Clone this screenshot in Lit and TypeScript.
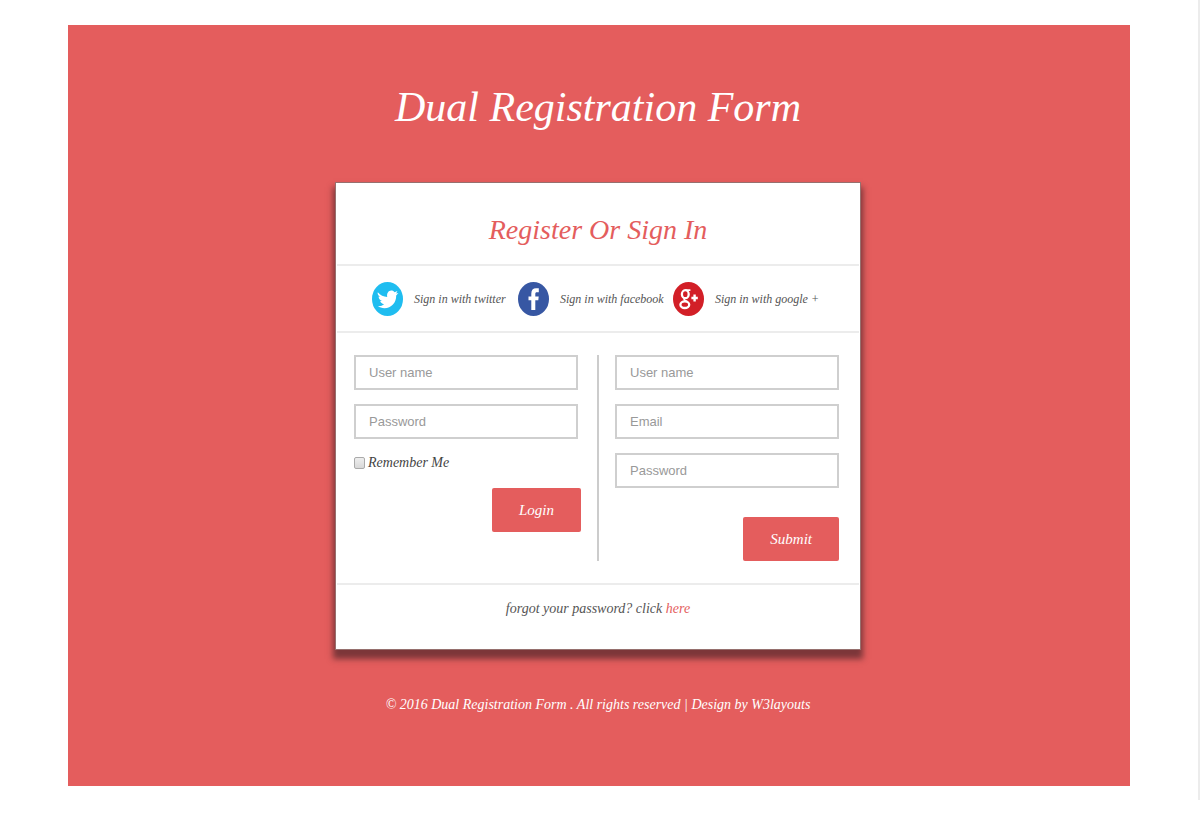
import { LitElement, html, css, svg } from "lit";
import { customElement } from "lit/decorators.js";

const twitter = svg`<ellipse cx="15.5" cy="17" rx="15.5" ry="17" fill="#1fbdf0"/>
<path fill="#fff" d="M5.8 10.2C8.3 13.3 11.6 14.8 15.2 14.9C14.5 11.6 16.5 8.6 19.2 8.6C20.7 8.6 21.8 9.2 22.6 10.2L25.4 9L24.2 11.5L26.4 10.9L24.2 13.5C24.4 20.7 19.2 26.2 12.5 26.2C9.9 26.2 7.6 25.5 5.8 24.1C8.4 24.3 10.4 23.6 12.1 22.2C10 22 8.7 20.8 8.2 19.1H10C7.8 18.3 6.7 16.7 6.6 14.5L8.4 15C6.3 13.5 5.2 12 5.8 10.2Z"/>`;
const facebook = svg`<ellipse cx="15.5" cy="17" rx="15.5" ry="17" fill="#3757a3"/>
<path fill="#fff" d="M13.3 28V18.3H10.5V14.4H13.3V11.7C13.3 8 15.1 6.2 18 6.2H20.8V10.2H18.8C17.7 10.2 17.3 10.8 17.3 12V14.4H20.7L20.3 18.3H17.3V28Z"/>`;
const google = svg`<ellipse cx="15.5" cy="17" rx="15.5" ry="17" fill="#d21f27"/>
<g fill="none" stroke="#fff">
<ellipse cx="12.3" cy="12.2" rx="3.4" ry="4" stroke-width="2.3"/>
<path stroke-width="1.8" d="M12.6 8.1H17.4M11.6 16.3C10.3 18.3 12.4 18.6 14 19.6"/>
<ellipse cx="11.8" cy="22.7" rx="4.4" ry="3.3" stroke-width="2.3"/>
<path stroke-width="2.4" d="M21.6 12.6V19.4M18.4 16H24.8"/></g>`;

const providers = [
  { icon: twitter, label: "Sign in with twitter" },
  { icon: facebook, label: "Sign in with facebook" },
  { icon: google, label: "Sign in with google +" },
];

@customElement("app-root")
export class AppRoot extends LitElement {
  static styles = css`
    :host {
      display: block;
      font-family: "Liberation Serif", serif;
      font-style: italic;
      font-size: 14px;
      line-height: 20px;
      color: #555;
    }
    * { box-sizing: border-box; }
    a { color: inherit; text-decoration: none; }
    .page {
      padding: 25px 68px 14px;
      border-right: 2px solid #ececec;
      background: #fff;
    }
    .stage {
      padding: 52px 26px 71px 24px;
      background: #e45d5d;
      display: flex;
      flex-direction: column;
      align-items: center;
    }
    h1, h2 { margin: 0; font-weight: 400; text-align: center; }
    h1 { font-size: 42px; line-height: 60px; color: #fff; }
    .card {
      width: 100%;
      max-width: 526px;
      margin: 45px 0;
      background: #fff;
      border: 1px solid #96706e;
      box-shadow: 0 7px 6px 2px rgba(60, 30, 35, 0.62);
      padding: 0 1px;
    }
    h2 {
      padding: 28px 0 15px;
      font-size: 28px;
      line-height: 38px;
      color: #e45d5d;
      border-bottom: 2px solid #ececec;
    }
    .social {
      display: grid;
      grid-template-columns: 147fr 156fr 146fr;
      padding: 16px 40px 15px 35px;
      border-bottom: 2px solid #ececec;
      font-size: 12px;
    }
    .provider { display: flex; align-items: center; gap: 11px; white-space: nowrap; }
    .provider svg { width: 31px; height: 34px; flex: none; }
    .forms {
      display: grid;
      grid-template-columns: 49fr 48fr;
      padding: 22px 20px 22px 17px;
      border-bottom: 2px solid #ececec;
    }
    form { display: flex; flex-direction: column; }
    .login { padding-right: 16px; border-right: 2px solid #ccc; }
    .register { padding-left: 16px; }
    .field {
      width: 100%;
      height: 35px;
      margin: 0 0 14px;
      padding: 0 13px;
      border: 2px solid #cfcfcf;
      border-radius: 0;
      background: #fff;
      font: 13px "Liberation Sans", sans-serif;
      color: #555;
      outline: none;
    }
    .login .field { width: calc(100% - 3px); }
    .field::placeholder { color: #999; opacity: 1; }
    .remember { display: flex; align-items: center; gap: 3px; color: #444; }
    .check {
      appearance: none;
      width: 11px;
      height: 12px;
      margin: 0;
      border: 1px solid #aaa;
      border-radius: 2px;
      background: linear-gradient(#eee, #d8d8d8);
    }
    .check:checked { background: #e45d5d; }
    button {
      align-self: flex-end;
      height: 44px;
      margin-top: 15px;
      padding: 0 27px;
      border: 0;
      border-radius: 2px;
      background: #e45d5d;
      color: #fff;
      font: inherit;
      font-size: 15px;
      cursor: pointer;
    }
    .forgot { margin: 0; padding: 14px 0 30px; text-align: center; }
    .forgot a { color: #e45d5d; }
    footer { color: #fff; text-align: center; }
  `;

  render() {
    return html`
      <div class="page">
        <main class="stage">
          <h1>Dual Registration Form</h1>
          <section class="card">
            <h2>Register Or Sign In</h2>
            <nav class="social">
              ${providers.map(
                (p) => html`<a class="provider" href="#">
                  <svg viewBox="0 0 31 34" aria-hidden="true">${p.icon}</svg>
                  <span>${p.label}</span>
                </a>`
              )}
            </nav>
            <div class="forms">
              <form class="login">
                <input class="field" type="text" placeholder="User name" aria-label="User name" />
                <input class="field" type="password" placeholder="Password" aria-label="Password" />
                <label class="remember"><input class="check" type="checkbox" />Remember Me</label>
                <button type="button">Login</button>
              </form>
              <form class="register">
                <input class="field" type="text" placeholder="User name" aria-label="User name" />
                <input class="field" type="email" placeholder="Email" aria-label="Email" />
                <input class="field" type="password" placeholder="Password" aria-label="Password" />
                <button type="button">Submit</button>
              </form>
            </div>
            <p class="forgot">forgot your password? click <a href="#">here</a></p>
          </section>
          <footer>
            © 2016 Dual Registration Form . All rights reserved | Design by
            <a href="#">W3layouts</a>
          </footer>
        </main>
      </div>
    `;
  }
}
